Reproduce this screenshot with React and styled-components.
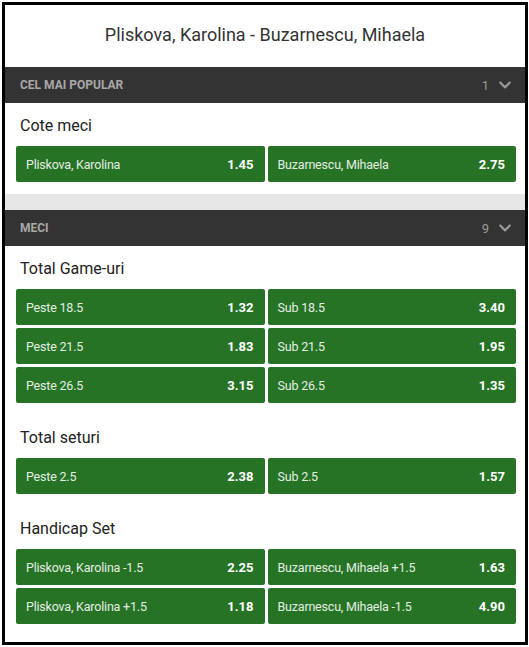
import React from "react";
import styled, { createGlobalStyle } from "styled-components";
import { FaChevronDown } from "react-icons/fa";

const GlobalStyle = createGlobalStyle`
    body {
        margin: 0;
        background: #fff;
        font-family: Roboto, "Liberation Sans", Arial, sans-serif;
    }
`

const Page = styled.div`
    padding: 2px;
`

const Frame = styled.div`
    width: 526px;
    box-sizing: border-box;
    border: 3px solid #000;
    padding-bottom: 6px;
    background: #fff;
`

const EventTitle = styled.h1`
    margin: 0;
    height: 62px;
    box-sizing: border-box;
    padding-bottom: 3px;
    display: flex;
    align-items: center;
    justify-content: center;
    font-size: 18px;
    font-weight: 400;
    color: #333;
`

const GroupHeader = styled.div`
    height: 36px;
    background: #333;
    display: flex;
    align-items: center;
    justify-content: space-between;
    padding: 0 13px 0 15px;
`

const GroupLabel = styled.span`
    font-size: 12px;
    font-weight: 700;
    color: #a8a8a8;
    text-transform: uppercase;
`

const GroupCount = styled.span`
    display: flex;
    align-items: center;
    gap: 9px;
    font-size: 13px;
    color: #9a9a9a;
`

const GroupBody = styled.div`
    padding: 13px 9px 12px 11px;
    display: flex;
    flex-direction: column;
    gap: 25px;
`

const Separator = styled.div`
    height: 16px;
    background: #e6e6e6;
`

const MarketTitle = styled.div`
    font-size: 16px;
    line-height: 20px;
    color: #222;
    padding-left: 4px;
    margin-bottom: 10px;
`

const OddsGrid = styled.div`
    display: grid;
    grid-template-columns: 1fr 1fr;
    gap: 3px;
`

const OddButton = styled.div`
    height: 36px;
    background: #267326;
    border-radius: 2px;
    display: flex;
    align-items: center;
    justify-content: space-between;
    padding: 0 11px 0 10px;
`

const OddLabel = styled.span`
    font-size: 12.5px;
    letter-spacing: -0.2px;
    color: #e3eee3;
`

const OddValue = styled.span`
    font-size: 13px;
    font-weight: 700;
    color: #fff;
`

const groups = [
    {
        name: "Cel mai popular",
        count: 1,
        markets: [
            {
                title: "Cote meci",
                odds: [
                    ["Pliskova, Karolina", "1.45"],
                    ["Buzarnescu, Mihaela", "2.75"],
                ],
            },
        ],
    },
    {
        name: "Meci",
        count: 9,
        markets: [
            {
                title: "Total Game-uri",
                odds: [
                    ["Peste 18.5", "1.32"],
                    ["Sub 18.5", "3.40"],
                    ["Peste 21.5", "1.83"],
                    ["Sub 21.5", "1.95"],
                    ["Peste 26.5", "3.15"],
                    ["Sub 26.5", "1.35"],
                ],
            },
            {
                title: "Total seturi",
                odds: [
                    ["Peste 2.5", "2.38"],
                    ["Sub 2.5", "1.57"],
                ],
            },
            {
                title: "Handicap Set",
                odds: [
                    ["Pliskova, Karolina -1.5", "2.25"],
                    ["Buzarnescu, Mihaela +1.5", "1.63"],
                    ["Pliskova, Karolina +1.5", "1.18"],
                    ["Buzarnescu, Mihaela -1.5", "4.90"],
                ],
            },
        ],
    },
]

const App = () => {
    return (
        <Page>
            <GlobalStyle />
            <Frame>
                <EventTitle>Pliskova, Karolina - Buzarnescu, Mihaela</EventTitle>
                {groups.map((group, i) => (
                    <React.Fragment key={group.name}>
                        {i > 0 && <Separator />}
                        <GroupHeader>
                            <GroupLabel>{group.name}</GroupLabel>
                            <GroupCount>
                                {group.count}
                                <FaChevronDown size={14} color="#9a9a9a" />
                            </GroupCount>
                        </GroupHeader>
                        <GroupBody>
                            {group.markets.map((market) => (
                                <div key={market.title}>
                                    <MarketTitle>{market.title}</MarketTitle>
                                    <OddsGrid>
                                        {market.odds.map(([label, value]) => (
                                            <OddButton key={label}>
                                                <OddLabel>{label}</OddLabel>
                                                <OddValue>{value}</OddValue>
                                            </OddButton>
                                        ))}
                                    </OddsGrid>
                                </div>
                            ))}
                        </GroupBody>
                    </React.Fragment>
                ))}
            </Frame>
        </Page>
    )
};

export default App;
